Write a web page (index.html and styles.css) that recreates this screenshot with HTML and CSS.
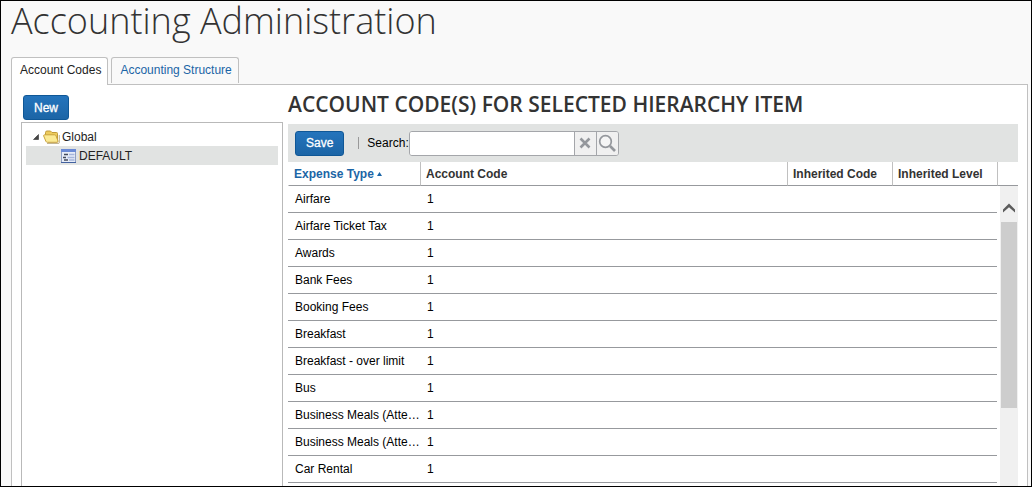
FILE: index.html
```html
<!DOCTYPE html>
<html lang="en">
<head>
<meta charset="utf-8">
<title>Accounting Administration</title>
<link rel="stylesheet" href="styles.css">
</head>
<body>
<div class="page">
  <h1 class="page-title">Accounting Administration</h1>
  <nav class="tabs">
    <a class="tab tab-active" href="#codes">Account Codes</a>
    <a class="tab" href="#structure">Accounting Structure</a>
  </nav>
  <main class="panel">
    <aside class="sidebar">
      <button class="btn" type="button">New</button>
      <ul class="tree">
        <li class="node">
          <svg class="arrow" width="8" height="8" viewBox="0 0 8 8"><path d="M6.500 1.500v5h-5z" fill="#444" stroke="#333" stroke-width=".6"/></svg>
          <svg class="folder" width="17" height="14" viewBox="0 0 17 14">
            <path d="M2.500 9V2.500Q2.500 1 4 1h3.500l1.500 1.500h4.500q1 0 1 1V11z" fill="#edcb5c" stroke="#c09a38"/>
            <path d="M.6 5.800q0-1 1-1h10q1 0 1.400 1l2 5.200q.3 1.300-1 1.300H4.500q-1.200 0-1.600-1z" fill="#fbea94" stroke="#c9a23c"/>
            <path d="M4 13.400h11.500q.8 0 .8-1V5" fill="none" stroke="#8f7434" stroke-opacity=".6"/>
          </svg>
          <span>Global</span>
        </li>
        <li class="node node-child node-selected">
          <svg class="form" width="15" height="14" viewBox="0 0 15 14">
            <path d="M.5.500h14v13H.5z" fill="#e6ecf8" stroke="#8f9fc4"/>
            <path d="M0 0h15v3H0z" fill="#6a8ad6"/>
            <path d="M3 5.500h4M2 8.500h3M3 11h4" stroke="#444b5c" stroke-width="1.500"/>
            <path d="M8 5.500h5.500M6.500 8.500h7M8 11h5.500" stroke="#a5b5dc" stroke-width="1.500"/>
            <path d="M0 13.500h15" stroke="#42619f"/>
          </svg>
          <span>DEFAULT</span>
        </li>
      </ul>
    </aside>
    <section class="content">
      <h2 class="heading">ACCOUNT CODE(S) FOR SELECTED HIERARCHY ITEM</h2>
      <div class="toolbar">
        <button class="btn" type="button">Save</button>
        <span class="divider"></span>
        <label class="search-label" for="search">Search:</label>
        <div class="search">
          <input class="search-input" id="search" type="text">
          <button class="search-btn" type="button" aria-label="Clear"><svg width="12" height="12" viewBox="0 0 12 12"><path d="M1.500 1.500l9 9M10.500 1.500l-9 9" stroke="#94979c" stroke-width="2.600"/></svg></button>
          <button class="search-btn" type="button" aria-label="Search"><svg width="18" height="18" viewBox="0 0 18 18"><circle cx="7.500" cy="7.500" r="5.800" fill="#f5f5f5" stroke="#94979c" stroke-width="1.700"/><path d="M12 12l5 5" stroke="#94979c" stroke-width="2.600"/></svg></button>
        </div>
      </div>
      <div class="grid">
        <table class="codes">
          <colgroup><col class="col-type"><col><col class="col-inh"><col class="col-inh"><col class="col-end"></colgroup>
          <thead>
            <tr><th class="sorted">Expense Type<svg class="sort" width="5" height="4" viewBox="0 0 5 4"><path d="M0 4L2.500 0 5 4z" fill="#1b65a6"/></svg></th><th>Account Code</th><th>Inherited Code</th><th>Inherited Level</th><td></td></tr>
          </thead>
          <tbody>
            <tr><td>Airfare</td><td>1</td><td></td><td></td></tr>
            <tr><td>Airfare Ticket Tax</td><td>1</td><td></td><td></td></tr>
            <tr><td>Awards</td><td>1</td><td></td><td></td></tr>
            <tr><td>Bank Fees</td><td>1</td><td></td><td></td></tr>
            <tr><td>Booking Fees</td><td>1</td><td></td><td></td></tr>
            <tr><td>Breakfast</td><td>1</td><td></td><td></td></tr>
            <tr><td>Breakfast - over limit</td><td>1</td><td></td><td></td></tr>
            <tr><td>Bus</td><td>1</td><td></td><td></td></tr>
            <tr><td>Business Meals (Atte…</td><td>1</td><td></td><td></td></tr>
            <tr><td>Business Meals (Atte…</td><td>1</td><td></td><td></td></tr>
            <tr><td>Car Rental</td><td>1</td><td></td><td></td></tr>
          </tbody>
        </table>
        <div class="scrollbar">
          <svg class="scroll-up" width="12" height="10" viewBox="0 0 12 10"><path d="M0 9.500V6.500L6 .5l6 6v3L6 4.200z" fill="#5c5c5c"/></svg>
          <div class="thumb"></div>
        </div>
      </div>
    </section>
  </main>
</div>
</body>
</html>
```
FILE: styles.css
```css
* { box-sizing: border-box; }
body {
  margin: 0;
  font: 12px/16px "Liberation Sans", Arial, sans-serif;
  color: #000;
}
.page {
  display: flex;
  flex-direction: column;
  height: 100vh;
  padding: 0 3px 0 10px;
  border: 1px solid #000;
  background: #f9f9f9;
}
.page-title {
  margin: 0;
  padding-bottom: 16px;
  font: 300 36px/40px "Open Sans", sans-serif;
  color: #333;
}
.tabs {
  display: flex;
  gap: 3px;
  position: relative;
  z-index: 1;
}
.tab {
  height: 26px;
  padding: 4px 6px 4px 8px;
  border: 1px solid #c0c0c0;
  border-bottom: 0;
  border-radius: 3px 3px 0 0;
  color: #1b65a6;
  text-decoration: none;
}
.tab-active {
  height: 28px;
  margin-bottom: -1px;
  background: #fff;
  color: #222;
}
.panel {
  flex: 1;
  display: flex;
  gap: 5px;
  min-height: 0;
  padding: 0 9px;
  border: 1px solid #c0c0c0;
  border-bottom: 0;
  background: #fff;
  overflow: hidden;
}
.sidebar {
  display: flex;
  flex-direction: column;
  flex: 0 0 262px;
  padding-top: 10px;
}
.btn {
  align-self: flex-start;
  height: 25px;
  padding: 0 10px;
  border: 1px solid #0f5796;
  border-radius: 3px;
  background: linear-gradient(#2474bc, #1c65a6);
  color: #fff;
  font: 12px/16px "Liberation Sans", Arial, sans-serif;
  -webkit-text-stroke: 0.3px #fff;
}
.sidebar .btn { margin-left: 2px; }
.tree {
  flex: 1;
  margin: 2px 0 0;
  padding: 4px;
  border: 1px solid #b9b9b9;
  border-bottom: 0;
  list-style: none;
}
.node {
  display: flex;
  align-items: center;
  height: 19px;
  padding-left: 6px;
  color: #222;
}
.folder { margin: 0 2px 0 3px; }
.node-child { padding-left: 35px; }
.node-selected { background: #e1e3e2; }
.form { margin-right: 3px; }
.content {
  display: flex;
  flex-direction: column;
  flex: 1;
  min-width: 0;
}
.heading {
  margin: 0;
  padding: 5px 0 6px;
  font: 600 21px/28px "Open Sans", sans-serif;
  color: #333;
}
.toolbar {
  display: flex;
  align-items: center;
  height: 38px;
  padding: 0 7px;
  background: #e1e3e2;
}
.toolbar .btn { align-self: center; }
.divider {
  width: 1px;
  height: 12px;
  margin: 0 8px 0 14px;
  background: #999;
}
.search {
  display: flex;
  height: 25px;
  border: 1px solid #a4a6aa;
  border-radius: 3px;
  background: #f0f0f0;
  overflow: hidden;
}
.search-input {
  width: 164px;
  padding: 0 4px;
  border: 0;
  background: #fff;
  font: inherit;
}
.search-btn {
  display: flex;
  align-items: center;
  justify-content: center;
  width: 22px;
  padding: 0;
  border: 0;
  border-left: 1px solid #a4a6aa;
  background: #f0f0f0;
}
.grid {
  position: relative;
  flex: 1;
  min-height: 0;
}
.codes {
  width: 100%;
  table-layout: fixed;
  border-collapse: separate;
  border-spacing: 0;
}
.col-type { width: 132px; }
.col-inh { width: 105px; }
.col-end { width: 21px; }
.codes tr > * {
  height: 27px;
  padding: 0 0 0 7px;
  border-bottom: 1px solid #97999d;
  white-space: nowrap;
  text-align: left;
}
.codes thead tr > * {
  height: 24px;
  padding-left: 5px;
  border-left: 1px solid #c0c0c0;
  color: #333;
}
.codes thead tr > :first-child { border-left-color: transparent; }
.codes thead .sorted { color: #1b65a6; }
.sort {
  margin-left: 3px;
  vertical-align: 2px;
}
.scrollbar {
  position: absolute;
  top: 24px;
  right: 0;
  bottom: 0;
  display: flex;
  flex-direction: column;
  align-items: center;
  width: 18px;
  padding-top: 17px;
  background: #f0f0f0;
}
.thumb {
  width: 16px;
  height: 186px;
  margin-top: 9px;
  background: #cdcdcd;
}
```
